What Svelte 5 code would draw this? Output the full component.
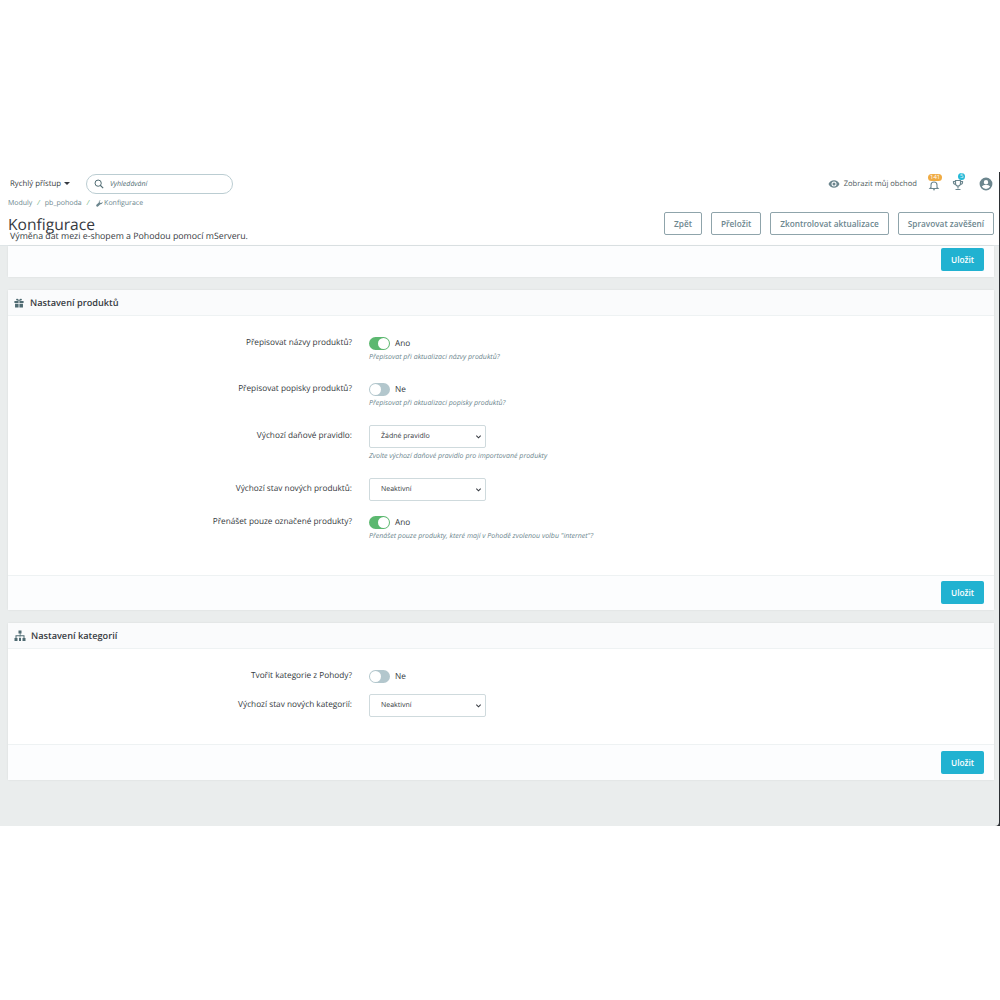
<script>
  const productRows = [
    { label: "Přepisovat názvy produktů?", on: true, help: "Přepisovat při aktualizaci názvy produktů?" },
    { label: "Přepisovat popisky produktů?", on: false, help: "Přepisovat při aktualizaci popisky produktů?" },
    { label: "Výchozí daňové pravidlo:", select: "Žádné pravidlo", help: "Zvolte výchozí daňové pravidlo pro importované produkty" },
    { label: "Výchozí stav nových produktů:", select: "Neaktivní" },
    { label: "Přenášet pouze označené produkty?", on: true, help: "Přenášet pouze produkty, které mají v Pohodě zvolenou volbu \"internet\"?" }
  ];
  const categoryRows = [
    { label: "Tvořit kategorie z Pohody?", on: false },
    { label: "Výchozí stav nových kategorií:", select: "Neaktivní" }
  ];
  const actions = ["Zpět", "Přeložit", "Zkontrolovat aktualizace", "Spravovat zavěšení"];
</script>

{#snippet formRow(row)}
  <div class="row" class:has-help={row.help} class:is-select={row.select}>
    <span class="label">{row.label}</span>
    <div class="control">
      {#if row.select}
        <div class="select">
          <span>{row.select}</span>
          <svg width="7" height="7" viewBox="0 0 16 16"><path d="M3 6l5 5 5-5" fill="none" stroke="#363a41" stroke-width="2.4"/></svg>
        </div>
      {:else}
        <div class="switch-line">
          <span class="switch" class:on={row.on}><i></i></span>
          <span class="state">{row.on ? "Ano" : "Ne"}</span>
        </div>
      {/if}
      {#if row.help}<p class="help">{row.help}</p>{/if}
    </div>
  </div>
{/snippet}

<div class="shot">
  <div class="frame">
    <div class="page">
      <header>
        <div class="topbar">
          <span class="quick">Rychlý přístup <b class="caret"></b></span>
          <div class="search">
            <svg width="10" height="10" viewBox="0 0 24 24"><circle cx="10" cy="10" r="7.500" fill="none" stroke="#4f6b72" stroke-width="2.4"/><path d="M15 15l7 7" stroke="#4f6b72" stroke-width="2.6"/></svg>
            <em>Vyhledávání</em>
          </div>
          <div class="spacer"></div>
          <span class="shop">
            <svg width="12" height="12" viewBox="0 0 24 24"><path fill="#6c868e" d="M12 4.500C7 4.500 2.700 7.600 1 12c1.700 4.400 6 7.500 11 7.500s9.300-3.100 11-7.500c-1.700-4.400-6-7.500-11-7.500zM12 17a5 5 0 1 1 0-10 5 5 0 0 1 0 10zm0-8a3 3 0 1 0 0 6 3 3 0 0 0 0-6z"/></svg>
            Zobrazit můj obchod
          </span>
          <span class="notif bell">
            <svg width="12" height="12" viewBox="0 0 24 24"><path fill="none" stroke="#6c868e" stroke-width="2.200" d="M6 17v-5c0-3 2.500-6 6-6s6 3 6 6v5l2 2H4zM10 21.500h4"/></svg>
            <b class="orange">141</b>
          </span>
          <span class="notif cup">
            <svg width="12" height="12" viewBox="0 0 24 24"><path fill="none" stroke="#6c868e" stroke-width="2.400" d="M7 3h10v6a5 5 0 0 1-10 0zM7 5H3v2a4 4 0 0 0 4 4M17 5h4v2a4 4 0 0 1-4 4M12 14v5M7 21h10"/></svg>
            <b class="blue">5</b>
          </span>
          <svg class="avatar" width="14" height="14" viewBox="0 0 24 24"><path fill="#6c868e" d="M12 1a11 11 0 1 0 0 22 11 11 0 0 0 0-22zm0 4a3.800 3.800 0 1 1 0 7.600A3.800 3.800 0 0 1 12 5zm0 15.500a8.500 8.500 0 0 1-7-3.700c.1-2.300 4.700-3.600 7-3.600s6.900 1.300 7 3.600a8.500 8.500 0 0 1-7 3.700z"/></svg>
        </div>
        <nav class="crumbs">
          <span>Moduly</span><i>/</i><span>pb_pohoda</span><i>/</i>
          <span class="last">
            <svg width="7" height="7" viewBox="0 0 16 16"><path fill="#6c868e" d="M15 4l-3 3-3-1-1-3 3-2.500C8.500 0 6 2 6.500 5.500L1 11c-1 1-.5 2.500 0 3.500s2.500 1.500 3.500.5l5.500-5.500C13 10 15.500 8 15 4z"/></svg>
            Konfigurace
          </span>
        </nav>
        <div class="titlebar">
          <div class="titles">
            <h1>Konfigurace</h1>
            <p>Výměna dat mezi e-shopem a Pohodou pomocí mServeru.</p>
          </div>
          <div class="actions">
            {#each actions as action}
              <button class="outline">{action}</button>
            {/each}
          </div>
        </div>
      </header>

      <section class="card first">
        <div class="footer"><button class="save">Uložit</button></div>
      </section>

      <section class="card products">
        <h2>
          <svg width="10" height="10" viewBox="0 0 24 24"><path fill="#4f6b72" d="M1 7h10v5H1zm12 0h10v5H13zM2.500 13.500H11V23H2.500zm10.500 0h8.500V23H13zM12 6.500C9 6.500 5 6 5 3.500 5 1 9 .5 12 5.500 15 .5 19 1 19 3.500 19 6 15 6.500 12 6.500z"/></svg>
          Nastavení produktů
        </h2>
        <div class="form">
          {#each productRows as row}
            {@render formRow(row)}
          {/each}
        </div>
        <div class="footer"><button class="save">Uložit</button></div>
      </section>

      <section class="card categories">
        <h2>
          <svg width="12" height="12" viewBox="0 0 24 24"><path fill="#4f6b72" d="M9 1h6v6h-2v3.500h8V16h2v6h-6v-6h2v-3.500h-6.500V16h1.500v6H10v-6h1.500v-3.500H5V16h2v6H1v-6h2v-5.500h8.500V7H9z"/></svg>
          Nastavení kategorií
        </h2>
        <div class="form">
          {#each categoryRows as row}
            {@render formRow(row)}
          {/each}
        </div>
        <div class="footer"><button class="save">Uložit</button></div>
      </section>
    </div>
  </div>
</div>

<style>
  :global(body) {
    background: #fff;
  }
  .shot {
    padding-top: 172px;
    font-family: "Open Sans", sans-serif;
    color: #363a41;
    text-rendering: geometricPrecision;
  }
  .frame {
    background: #2b2f33;
  }
  .page {
    height: 654px;
    margin-right: 1px;
    background: #eaeded;
    border-bottom-right-radius: 4px;
    overflow: hidden;
  }
  header {
    height: 73px;
    background: #fff;
    border-bottom: 1px solid #dfe5e7;
  }
  .topbar {
    display: flex;
    align-items: center;
    height: 24px;
    padding: 0 6px 0 10px;
  }
  .quick {
    font-size: 7.800px;
    width: 76px;
    margin-top: -1px;
  }
  .caret {
    display: inline-block;
    border: 3px solid transparent;
    border-top-color: #363a41;
    border-bottom: 0;
    vertical-align: middle;
    margin-left: 1px;
  }
  .search {
    display: flex;
    align-items: center;
    gap: 6px;
    box-sizing: border-box;
    width: 147px;
    height: 20px;
    padding-left: 7px;
    border: 1px solid #bbcdd2;
    border-radius: 10px;
  }
  .search em {
    font-size: 7px;
    color: #4f6b72;
  }
  .spacer {
    flex: 1;
  }
  .shop {
    display: flex;
    align-items: center;
    gap: 4px;
    font-size: 7.600px;
    color: #4f5b60;
    margin-right: 11px;
  }
  .notif {
    position: relative;
    display: flex;
    margin-right: 12px;
    padding-top: 2px;
  }
  .notif.cup {
    margin-right: 15px;
  }
  .notif b {
    position: absolute;
    top: -3px;
    left: 0;
    font-size: 6px;
    line-height: 7px;
    padding: 0 2px;
    border-radius: 4px;
    color: #fff;
    font-weight: 400;
  }
  .notif b.orange {
    background: #f0ab42;
  }
  .notif b.blue {
    background: #25b9d7;
    left: 6px;
    top: -4px;
  }
  .crumbs {
    display: flex;
    align-items: center;
    box-sizing: border-box;
    height: 14px;
    padding: 1px 0 0 8px;
    font-size: 7px;
    color: #6c868e;
  }
  .crumbs i {
    margin: 0 5px;
    color: #70b580;
  }
  .last {
    display: flex;
    align-items: center;
    gap: 1px;
    margin-left: 2px;
  }
  .titlebar {
    display: flex;
    justify-content: space-between;
    padding-right: 5px;
    padding-left: 8px;
  }
  .titles {
    padding-top: 4px;
  }
  h1 {
    margin: 0;
    font-size: 15.600px;
    font-weight: 400;
    line-height: 20px;
  }
  .titles p {
    margin: -3px 0 0 2px;
    font-size: 8.800px;
    line-height: 11px;
  }
  .actions {
    display: flex;
    gap: 9px;
    padding-top: 2px;
  }
  button {
    font-family: inherit;
    font-weight: 600;
    font-size: 8.250px;
    border-radius: 2px;
    height: 23px;
    padding: 0 9px;
  }
  .outline {
    background: #fff;
    border: 1px solid #8fa4ab;
    color: #6c868e;
  }
  .save {
    width: 43px;
    padding: 0;
    background: #21b2d1;
    border: 0;
    color: #fff;
  }
  .card {
    display: flex;
    flex-direction: column;
    margin: 0 5px 13px 8px;
    background: #fff;
    border-radius: 2px;
    box-shadow: 0 0 2px rgba(0, 0, 0, 0.1);
  }
  .card.first {
    height: 31px;
  }
  .card.first .footer {
    height: 100%;
    border-top: 0;
    padding-top: 2px;
  }
  .card.products {
    height: 320px;
  }
  .card.categories {
    height: 157px;
  }
  h2 {
    display: flex;
    align-items: center;
    gap: 6px;
    box-sizing: border-box;
    height: 26px;
    margin: 0;
    padding-left: 6px;
    background: #fafbfc;
    border-bottom: 1px solid #eef2f3;
    font-size: 9.200px;
    font-weight: 600;
  }
  .categories h2 {
    gap: 5px;
  }
  .form {
    flex: 1;
    padding-top: 17px;
  }
  .row {
    display: grid;
    grid-template-columns: 344px auto;
    column-gap: 17px;
    margin-bottom: 11px;
  }
  .row.has-help {
    margin-bottom: 17px;
  }
  .label {
    padding-top: 3px;
    text-align: right;
    font-size: 8.250px;
    line-height: 14px;
  }
  .is-select .label {
    padding-top: 4px;
  }
  .control {
    padding-top: 3px;
  }
  .is-select .control {
    padding-top: 0;
  }
  .switch-line {
    display: flex;
    align-items: center;
    gap: 5px;
    height: 14px;
  }
  .switch {
    position: relative;
    display: block;
    width: 21px;
    height: 13px;
    border-radius: 7px;
    background: #b3c7cd;
  }
  .switch i {
    position: absolute;
    top: 1px;
    left: 1px;
    width: 11px;
    height: 11px;
    border-radius: 50%;
    background: #fff;
  }
  .switch.on {
    background: #5cb870;
  }
  .switch.on i {
    left: 9px;
  }
  .state {
    font-size: 8.250px;
  }
  .help {
    margin: 3px 0 0;
    font-size: 7px;
    line-height: 9px;
    font-style: italic;
    color: #6c868e;
  }
  .is-select .help {
    margin-top: 4px;
  }
  .select {
    display: flex;
    align-items: center;
    justify-content: space-between;
    box-sizing: border-box;
    width: 117px;
    height: 23px;
    padding: 0 3px 0 11px;
    border: 1px solid #cfdadd;
    border-radius: 2px;
    font-size: 7px;
  }
  .footer {
    display: flex;
    align-items: flex-start;
    justify-content: flex-end;
    box-sizing: border-box;
    height: 35px;
    padding: 5px 10px 0 0;
    background: #fcfdfe;
    border-top: 1px solid #eef2f3;
  }
  .categories .footer {
    height: 36px;
    padding-top: 6px;
  }
</style>
